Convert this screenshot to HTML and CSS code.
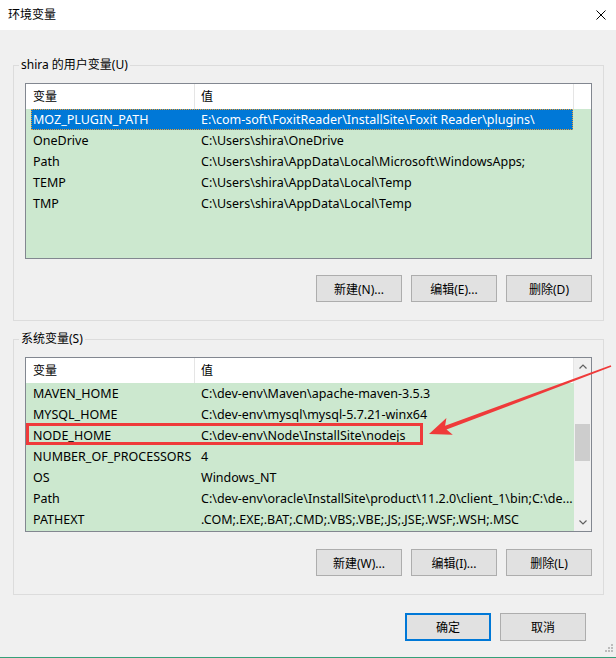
FILE: index.html
```html
<!DOCTYPE html>
<html lang="zh-CN">
<head>
<meta charset="utf-8">
<title>环境变量</title>
<link rel="stylesheet" href="styles.css">
</head>
<body>
<div class="window">
  <div class="titlebar">
    <span class="title">环境变量</span>
    <svg class="close" width="10" height="10" viewBox="0 0 10 10"><path d="M0.5 0.5L9.5 9.5M9.5 0.5L0.5 9.5" stroke="#000" stroke-width="1" fill="none"/></svg>
  </div>
  <div class="body">
    <fieldset class="group">
      <legend>shira 的用户变量(U)</legend>
      <div class="group-body">
        <div class="list list-user">
          <div class="list-main">
            <div class="list-header"><div class="hcell c1">变量</div><div class="hcell c2">值</div></div>
            <div class="row selected"><div class="cell c1">MOZ_PLUGIN_PATH</div><div class="cell c2">E:\com-soft\FoxitReader\InstallSite\Foxit Reader\plugins\</div></div>
            <div class="row"><div class="cell c1">OneDrive</div><div class="cell c2">C:\Users\shira\OneDrive</div></div>
            <div class="row"><div class="cell c1">Path</div><div class="cell c2">C:\Users\shira\AppData\Local\Microsoft\WindowsApps;</div></div>
            <div class="row"><div class="cell c1">TEMP</div><div class="cell c2">C:\Users\shira\AppData\Local\Temp</div></div>
            <div class="row"><div class="cell c1">TMP</div><div class="cell c2">C:\Users\shira\AppData\Local\Temp</div></div>
          </div>
        </div>
        <div class="buttons">
          <button class="btn">新建(N)...</button>
          <button class="btn">编辑(E)...</button>
          <button class="btn">删除(D)</button>
        </div>
      </div>
    </fieldset>
    <fieldset class="group">
      <legend>系统变量(S)</legend>
      <div class="group-body">
        <div class="list list-sys">
          <div class="list-main">
            <div class="list-header"><div class="hcell c1">变量</div><div class="hcell c2">值</div></div>
            <div class="row"><div class="cell c1">MAVEN_HOME</div><div class="cell c2">C:\dev-env\Maven\apache-maven-3.5.3</div></div>
            <div class="row"><div class="cell c1">MYSQL_HOME</div><div class="cell c2">C:\dev-env\mysql\mysql-5.7.21-winx64</div></div>
            <div class="row"><div class="cell c1">NODE_HOME</div><div class="cell c2">C:\dev-env\Node\InstallSite\nodejs</div></div>
            <div class="row"><div class="cell c1">NUMBER_OF_PROCESSORS</div><div class="cell c2">4</div></div>
            <div class="row"><div class="cell c1">OS</div><div class="cell c2">Windows_NT</div></div>
            <div class="row"><div class="cell c1">Path</div><div class="cell c2">C:\dev-env\oracle\InstallSite\product\11.2.0\client_1\bin;C:\de...</div></div>
            <div class="row"><div class="cell c1">PATHEXT</div><div class="cell c2">.COM;.EXE;.BAT;.CMD;.VBS;.VBE;.JS;.JSE;.WSF;.WSH;.MSC</div></div>
          </div>
          <div class="scrollbar">
            <div class="sb-btn"><svg width="8" height="5" viewBox="0 0 8 5"><path d="M0.5 4.5L4 1L7.5 4.5" stroke="#606060" stroke-width="1.2" fill="none"/></svg></div>
            <div class="sb-track"><div class="sb-thumb"></div></div>
            <div class="sb-btn"><svg width="8" height="5" viewBox="0 0 8 5"><path d="M0.5 0.5L4 4L7.5 0.5" stroke="#606060" stroke-width="1.2" fill="none"/></svg></div>
          </div>
        </div>
        <div class="buttons buttons-sys">
          <button class="btn">新建(W)...</button>
          <button class="btn">编辑(I)...</button>
          <button class="btn">删除(L)</button>
        </div>
      </div>
    </fieldset>
  </div>
  <div class="footer">
    <button class="btn btn-default">确定</button>
    <button class="btn">取消</button>
  </div>
  <svg class="grip" width="10" height="10" viewBox="0 0 10 10">
    <rect x="8" y="0" width="2" height="2" fill="#bcbcbc"/>
    <rect x="5" y="3" width="2" height="2" fill="#bcbcbc"/>
    <rect x="8" y="3" width="2" height="2" fill="#bcbcbc"/>
    <rect x="2" y="6" width="2" height="2" fill="#bcbcbc"/>
    <rect x="5" y="6" width="2" height="2" fill="#bcbcbc"/>
    <rect x="8" y="6" width="2" height="2" fill="#bcbcbc"/>
  </svg>
  <svg class="annot" width="616" height="658" viewBox="0 0 616 658">
    <rect x="27.5" y="424.5" width="394" height="19" fill="none" stroke="#ef3a3a" stroke-width="3"/>
    <polygon points="429,434 452.8,434.7 446.5,429.6 611.3,366.8 610.7,365.2 445.1,425.8 446.4,417.9" fill="#ef3a3a"/>
  </svg>
</div>
</body>
</html>
```

FILE: styles.css
```css
* { box-sizing: border-box; }
html, body { margin: 0; padding: 0; }
body {
  width: 616px;
  height: 658px;
  background: #f0f0f0;
  font-family: "Noto Sans", "Noto Sans CJK SC", sans-serif;
  font-size: 12px;
  color: #000;
}
.window {
  position: relative;
  width: 616px;
  height: 658px;
  background: #f0f0f0;
  border-bottom: 1px solid #35a079;
  display: flex;
  flex-direction: column;
}
.titlebar {
  height: 30px;
  flex: none;
  background: #fff;
  display: flex;
  align-items: center;
  justify-content: space-between;
  padding: 0 10px 0 8px;
}
.title { line-height: 16px; }
.close { display: block; }
.body { padding: 27px 12px 0 13px; }
.group {
  margin: 0;
  padding: 0;
  border: 1px solid #dcdcdc;
  min-width: 0;
}
.group + .group { margin-top: 10px; }
.group legend {
  margin-left: 5px;
  padding: 0 2px;
  line-height: 16px;
}
.group-body { padding: 10px 11px 18px 11px; }
.list {
  border: 1px solid #828790;
  background: #cce8cf;
  display: flex;
  overflow: hidden;
}
.list-user { height: 176px; }
.list-sys { height: 175px; }
.list-main { flex: 1; min-width: 0; overflow: hidden; }
.list-header {
  height: 25px;
  background: #fff;
  display: flex;
}
.hcell {
  line-height: 25px;
  border-right: 1px solid #e5e5e5;
  white-space: nowrap;
  flex: none;
}
.hcell.c1 { width: 169px; padding-left: 7px; }
.hcell.c2 { width: 379px; padding-left: 6px; }
.row {
  display: flex;
  height: 21px;
  margin-left: 5px;
  width: 542px;
  line-height: 21px;
}
.cell { white-space: nowrap; overflow: hidden; flex: none; font-size: 12.5px; }
.cell.c1 { width: 163px; padding-left: 2px; }
.cell.c2 { width: 379px; padding-left: 7px; }
.row.selected {
  background: #0078d7;
  color: #fff;
  outline: 1px dotted #f0a030;
  outline-offset: -1px;
}
.scrollbar {
  width: 17px;
  flex: none;
  background: #f0f0f0;
  display: flex;
  flex-direction: column;
}
.sb-btn {
  height: 17px;
  flex: none;
  display: flex;
  align-items: center;
  justify-content: center;
}
.sb-btn svg { display: block; }
.sb-track { flex: 1; padding: 49px 1px 0; }
.sb-thumb { height: 37px; background: #cdcdcd; }
.buttons {
  display: flex;
  justify-content: flex-end;
  gap: 9px;
  margin-top: 16px;
}
.buttons-sys { margin-top: 17px; }
.btn {
  width: 86px;
  height: 27px;
  background: #e1e1e1;
  border: 1px solid #adadad;
  font: inherit;
  color: #000;
  padding: 0;
  margin: 0;
  border-radius: 0;
}
.footer {
  display: flex;
  justify-content: flex-end;
  gap: 9px;
  padding: 18px 30px 0 0;
}
.footer .btn { height: 28px; }
.btn-default { border: 2px solid #0078d7; }
.grip { position: absolute; right: 3px; bottom: 3px; display: block; }
.annot { position: absolute; left: 0; top: 0; pointer-events: none; }
```
